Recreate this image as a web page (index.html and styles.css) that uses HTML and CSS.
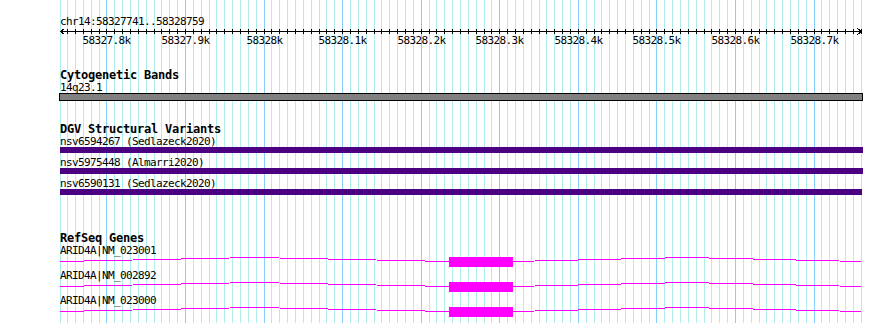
FILE: index.html
```html
<!DOCTYPE html>
<html lang="en">
<head>
  <meta charset="UTF-8" />
  <title>chr14:58327741..58328759</title>
  <link rel="stylesheet" href="styles.css">
</head>
<body>
  <div class="panel">
    <svg id="grid" class="grid" width="802" height="323"></svg>

    <div class="content">
      <div class="chrom">chr14:58327741..58328759</div>
      <svg id="ruler" class="ruler" width="802" height="21">
        <line class="axis" x1="0" y1="4.5" x2="801" y2="4.5" />
        <path class="axis" d="M4.5 1.5 L0.5 4.5 L4.5 7.5" />
        <path class="axis" d="M797.5 1.5 L801.5 4.5 L797.5 7.5" />
      </svg>

      <section class="track cyto">
        <h2 class="track-title">Cytogenetic Bands</h2>
        <div class="feat-label">14q23.1</div>
        <div class="band"></div>
      </section>

      <section class="track dgv">
        <h2 class="track-title">DGV Structural Variants</h2>
        <div class="rows">
          <div class="sv">
            <div class="feat-label">nsv6594267 (Sedlazeck2020)</div>
            <div class="sv-bar"></div>
          </div>
          <div class="sv">
            <div class="feat-label">nsv5975448 (Almarri2020)</div>
            <div class="sv-bar"></div>
          </div>
          <div class="sv">
            <div class="feat-label">nsv6590131 (Sedlazeck2020)</div>
            <div class="sv-bar short"></div>
          </div>
        </div>
      </section>

      <section class="track genes">
        <h2 class="track-title">RefSeq Genes</h2>
        <div class="rows">
          <div class="gene">
            <div class="feat-label">ARID4A|NM_023001</div>
            <svg class="gene-model" width="802" height="12">
              <polyline class="intron" points="0,5.5 194.5,1.5 389,5.5" />
              <polyline class="intron" points="453,5.5 627,1.5 801,5.5" />
              <rect class="exon" x="389" y="1" width="64" height="10" />
            </svg>
          </div>
          <div class="gene">
            <div class="feat-label">ARID4A|NM_002892</div>
            <svg class="gene-model" width="802" height="12">
              <polyline class="intron" points="0,5.5 194.5,1.5 389,5.5" />
              <polyline class="intron" points="453,5.5 627,1.5 801,5.5" />
              <rect class="exon" x="389" y="1" width="64" height="10" />
            </svg>
          </div>
          <div class="gene">
            <div class="feat-label">ARID4A|NM_023000</div>
            <svg class="gene-model" width="802" height="12">
              <polyline class="intron" points="0,5.5 194.5,1.5 389,5.5" />
              <polyline class="intron" points="453,5.5 627,1.5 801,5.5" />
              <rect class="exon" x="389" y="1" width="64" height="10" />
            </svg>
          </div>
        </div>
      </section>
    </div>
  </div>

  <script src="script.js"></script>
</body>
</html>
```

FILE: styles.css
```css
body {
  margin: 0;
  background-color: #fff;
  color: #000;
  font-family: "DejaVu Sans Mono", "Liberation Mono", monospace;
  overflow: hidden;
}

.panel {
  position: relative;
  margin-left: 60px;
  width: 802px;
  height: 323px;
}

.grid {
  position: absolute;
  top: 0;
  left: 0;
  z-index: 0;
}

.grid line {
  stroke-width: 1;
  shape-rendering: crispEdges;
}

.grid .minor {
  stroke: #afeeee;
}

.grid .major {
  stroke: #87cefa;
}

.content {
  position: relative;
  z-index: 1;
  padding-top: 16px;
}

.chrom,
.feat-label {
  font-size: 11px;
  letter-spacing: -0.62px;
  line-height: 11px;
  white-space: nowrap;
}

.ruler {
  display: block;
  overflow: visible;
}

.ruler .axis,
.ruler .tick {
  stroke: #000;
  stroke-width: 1;
  fill: none;
  shape-rendering: crispEdges;
}

.ruler text {
  font-family: "DejaVu Sans Mono", "Liberation Mono", monospace;
  font-size: 11px;
  letter-spacing: -0.62px;
  fill: #000;
}

.track-title {
  margin: 0 0 1px;
  font-size: 12px;
  letter-spacing: -0.23px;
  font-weight: bold;
  line-height: 12px;
  white-space: nowrap;
}

.cyto {
  margin-top: 21px;
}

.dgv {
  margin-top: 22px;
}

.genes {
  margin-top: 37px;
}

.band {
  box-sizing: border-box;
  height: 8px;
  margin: 0 -1px 0 -1px;
  border: 1px solid #000;
  background-color: #808080;
}

.rows {
  display: flex;
  flex-direction: column;
}

.dgv .rows {
  gap: 4px;
}

.genes .rows {
  gap: 2px;
}

.sv-bar {
  height: 6px;
  margin-right: -1px;
  background-color: #4b0082;
}

.sv-bar.short {
  margin-right: 0;
}

.gene-model {
  display: block;
  overflow: visible;
}

.intron {
  fill: none;
  stroke: #ff00ff;
  stroke-width: 1;
  shape-rendering: crispEdges;
}

.exon {
  fill: #ff00ff;
}
```

FILE: script.js
```js
const START = 58327741;
const END = 58328759;
const WIDTH = 800;
const NS = 'http://www.w3.org/2000/svg';
const scale = WIDTH / (END - START);

const grid = document.getElementById('grid');
const ruler = document.getElementById('ruler');

function xpos(bp) {
  return Math.round((bp - START) * scale) + 0.5;
}

function addLine(svg, x1, y1, x2, y2, cls) {
  const el = document.createElementNS(NS, 'line');
  el.setAttribute('x1', x1);
  el.setAttribute('y1', y1);
  el.setAttribute('x2', x2);
  el.setAttribute('y2', y2);
  el.setAttribute('class', cls);
  svg.appendChild(el);
}

// left edge of the panel
addLine(grid, 0.5, 0, 0.5, 323, 'minor');

for (let bp = Math.ceil(START / 10) * 10; bp <= END + 1; bp += 10) {
  const x = xpos(bp);
  const major = bp % 100 === 0;
  addLine(grid, x, 0, x, 323, major ? 'major' : 'minor');
  addLine(ruler, x, 2, x, 7, 'tick');

  if (major) {
    const label = document.createElementNS(NS, 'text');
    label.setAttribute('x', x);
    label.setAttribute('y', 17);
    label.setAttribute('text-anchor', 'middle');
    label.textContent = String(bp / 1000) + 'k';
    ruler.appendChild(label);
  }
}
```
